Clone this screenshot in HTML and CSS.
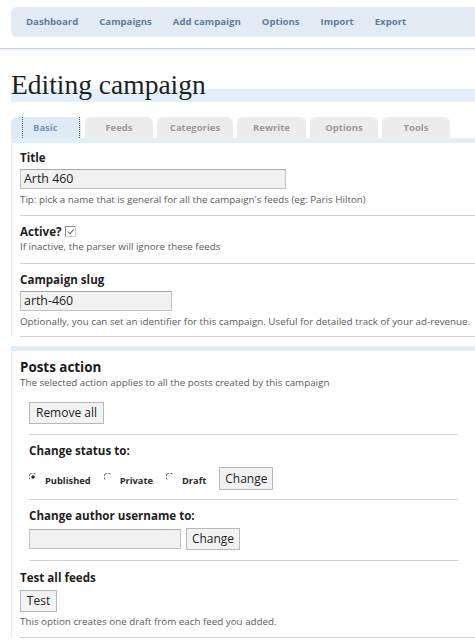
FILE: index.html
```
<!DOCTYPE html>
<html>
<head>
<meta charset="utf-8">
<link rel="stylesheet" href="styles.css">
</head>
<body>
<nav class="nav">
  <a>Dashboard</a><a>Campaigns</a><a>Add campaign</a><a>Options</a><a>Import</a><a>Export</a>
</nav>
<div class="rule"></div>
<h1 class="title">Editing campaign</h1>
<ul class="tabs">
  <li class="tab active"><a>Basic</a></li>
  <li class="tab w68">Feeds</li>
  <li class="tab w76">Categories</li>
  <li class="tab w69">Rewrite</li>
  <li class="tab w68">Options</li>
  <li class="tab w68">Tools</li>
</ul>
<div class="panel">
  <div class="field f1">
    <div class="label">Title</div>
    <div class="input wide">Arth 460</div>
    <div class="desc">Tip: pick a name that is general for all the campaign's feeds (eg: Paris Hilton)</div>
  </div>
  <div class="field f2">
    <div class="label inline">Active?<svg class="check" width="11" height="11" viewBox="0 0 11 11"><path d="M0.5 10.5 V0.5 H10.5" fill="none" stroke="#8a8a8a"/><path d="M10.5 0.5 V10.5 H0.5" fill="none" stroke="#d0d0d0"/><path d="M3 5.5 L5 7.8 L8.5 3.5" fill="none" stroke="#333" stroke-width="1"/></svg></div>
    <div class="desc">If inactive, the parser will ignore these feeds</div>
  </div>
  <div class="field f3">
    <div class="label">Campaign slug</div>
    <div class="input mid">arth-460</div>
    <div class="desc">Optionally, you can set an identifier for this campaign. Useful for detailed track of your ad-revenue.</div>
  </div>
</div>
<div class="panel section">
  <div class="sec-head">
    <div class="h3">Posts action</div>
    <div class="desc">The selected action applies to all the posts created by this campaign</div>
  </div>
  <div class="sub s1">
    <button class="btn b-remove">Remove all</button>
  </div>
  <div class="sub s2">
    <div class="label">Change status to:</div>
    <div class="radios">
      <span class="radio"><svg width="8" height="8" viewBox="0 0 8 8"><path d="M1 6.5 A3.5 3.5 0 0 1 6.5 1" fill="none" stroke="#666" stroke-width="1"/><circle cx="4" cy="4" r="1.7" fill="#222"/></svg>Published</span>
      <span class="radio"><svg width="8" height="8" viewBox="0 0 8 8"><path d="M1 6.5 A3.5 3.5 0 0 1 6.5 1" fill="none" stroke="#666" stroke-width="1"/></svg>Private</span>
      <span class="radio"><svg width="8" height="8" viewBox="0 0 8 8"><path d="M1 6.5 A3.5 3.5 0 0 1 6.5 1" fill="none" stroke="#666" stroke-width="1"/></svg>Draft</span>
      <button class="btn b-change">Change</button>
    </div>
  </div>
  <div class="sub s3">
    <div class="label">Change author username to:</div>
    <div class="row">
      <div class="input small"></div>
      <button class="btn b-change">Change</button>
    </div>
  </div>
  <div class="field f4">
    <div class="label">Test all feeds</div>
    <button class="btn b-test">Test</button>
    <div class="desc">This option creates one draft from each feed you added.</div>
  </div>
</div>
</body>
</html>
```
FILE: styles.css
```
html, body {
  margin: 0;
  padding: 0;
  background: #fff;
  overflow: hidden;
}
body {
  font-family: "Open Sans", "DejaVu Sans", sans-serif;
  color: #222;
}
.nav {
  margin: 7px 0 0 11px;
  height: 30px;
  background: #e2eaf3;
  border-radius: 6px 0 0 6px;
  display: flex;
  align-items: center;
  gap: 21px;
  padding-left: 15px;
}
.nav a {
  font-size: 9.6px;
  font-weight: 700;
  color: #5f7d9b;
  padding-bottom: 2px;
}
.rule {
  margin-top: 11px;
  height: 1px;
  background: #cdd3da;
  box-shadow: 0 1px 0 #eef3f8, 0 2px 0 #f4f8fb;
}
.title {
  margin: 12px 0 0 11px;
  height: 41px;
  box-sizing: border-box;
  padding: 7px 0 0;
  font-family: "Liberation Serif", "Times New Roman", serif;
  font-weight: 400;
  font-size: 27.5px;
  line-height: 34px;
  color: #1f1f1f;
  background: linear-gradient(to bottom, transparent 0, transparent 28px, #e3f0fb 28px);
}
.tabs {
  list-style: none;
  margin: 15px 0 0 11px;
  padding: 0;
  display: flex;
  gap: 4px;
  height: 21px;
}
.tab {
  height: 21px;
  background: #ececec;
  border-radius: 6px 6px 0 0;
  font-size: 9.5px;
  font-weight: 700;
  color: #9a9a9a;
  line-height: 22px;
  text-align: center;
  box-sizing: border-box;
}
.w68 { width: 68px; }
.w69 { width: 69px; }
.w76 { width: 76px; }
.tab.active {
  width: 70px;
  background: #deebf7;
  color: #7395b6;
  text-align: left;
  padding-left: 11px;
}
.tab.active a {
  display: block;
  height: 21px;
  width: 58px;
  box-sizing: border-box;
  border-left: 1px dotted #555;
  border-right: 1px dotted #555;
  padding-left: 10px;
}
.panel {
  margin-left: 11px;
  border-left: 1px solid #e6f0fa;
  border-top: 5px solid #e1eefa;
  padding-left: 8px;
}
.field {
  border-bottom: 1px solid #d2d2d2;
}
.f1 { padding: 7px 0 8px; }
.f2 { padding: 8px 0 9px; }
.f3 { padding: 8px 0 7px; }
.f4 { padding: 9px 0 8px; }
.label {
  font-size: 11.6px;
  font-weight: 700;
  line-height: 16px;
  color: #1e1e1e;
}
.label.inline {
  white-space: nowrap;
}
.check {
  display: inline-block;
  vertical-align: -1px;
  margin-left: 3px;
}
.desc {
  font-size: 9.8px;
  line-height: 14px;
  color: #5a5a5a;
  white-space: nowrap;
}
.input {
  margin-top: 3px;
  height: 20px;
  box-sizing: border-box;
  background: #f1f1f1;
  border: 1px solid #c2c2c2;
  border-top-color: #a9a9a9;
  font-size: 12.4px;
  line-height: 18px;
  padding-left: 3px;
  color: #222;
}
.f1 .desc, .f3 .desc { margin-top: 4px; }
.wide { width: 266px; }
.mid { width: 152px; }
.small { width: 152px; margin-top: 0; }
.section {
  margin-top: 9px;
}
.sec-head {
  padding-top: 7px;
}
.h3 {
  font-size: 13.4px;
  font-weight: 700;
  line-height: 18px;
  color: #1a1a1a;
}
.sub {
  margin-left: 9px;
  margin-right: 17px;
  border-bottom: 1px solid #d2d2d2;
}
.s1 { padding: 12px 0 10px; }
.s2 { padding: 8px 0 9px; }
.s3 { padding: 8px 0 10px; }
.btn {
  display: block;
  height: 22px;
  box-sizing: border-box;
  margin: 0;
  padding: 0;
  background: #f2f2f2;
  border: 1px solid #b8b8b8;
  border-radius: 0;
  font-family: "Open Sans", "DejaVu Sans", sans-serif;
  font-size: 12px;
  color: #1e1e1e;
  line-height: 20px;
  text-align: center;
}
.b-remove { width: 75px; }
.b-change { width: 54px; }
.b-test { width: 37px; margin-top: 4px; }
.f4 .desc { margin-top: 3px; }
.radios {
  margin-top: 8px;
  height: 23px;
  display: flex;
  align-items: center;
}
.radio {
  display: flex;
  align-items: center;
  font-size: 9.3px;
  font-weight: 700;
  color: #2a2a2a;
  margin-right: 13px;
  padding-top: 3px;
}
.radio svg {
  margin-right: 8px;
  margin-top: -6px;
}
.radios .btn { height: 23px; margin-left: 0; }
.row {
  margin-top: 4px;
  display: flex;
  align-items: center;
  gap: 5px;
}
```
